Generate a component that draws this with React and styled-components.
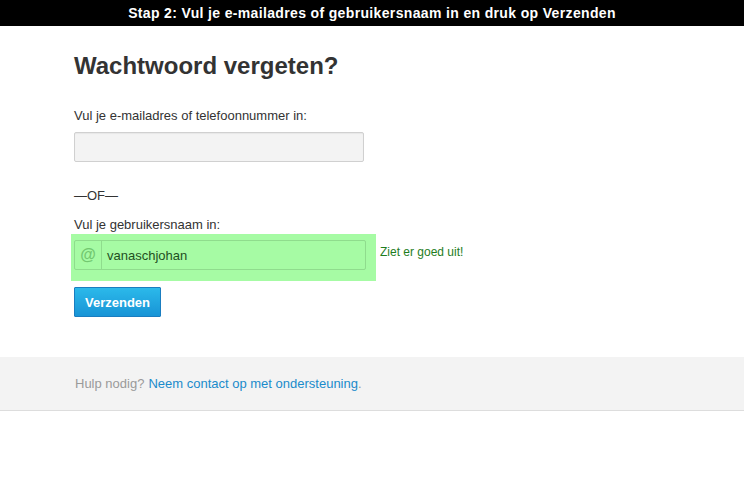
import React from 'react';
import styled, { createGlobalStyle } from 'styled-components';

const GlobalStyle = createGlobalStyle`
	body {
		margin: 0;
		background: #ffffff;
		font-family: "Liberation Sans", Arial, sans-serif;
		color: #333333;
	}
`;

const StepBar = styled.div`
	height: 26px;
	background: #000000;
	color: #ffffff;
	font-size: 14px;
	font-weight: bold;
	display: flex;
	align-items: center;
	justify-content: center;
	letter-spacing: 0.35px;
`;

const Main = styled.div`
	padding: 24px 74px 40px;
`;

const Title = styled.h1`
	margin: 0 0 26px;
	font-size: 24px;
	line-height: 32px;
	font-weight: bold;
	color: #333333;
`;

const Label = styled.div`
	font-size: 13px;
	line-height: 16px;
	color: #333333;
	margin-bottom: ${(props) => (props.tight ? '1px' : '8px')};
`;

const TextInput = styled.div`
	width: 288px;
	height: 28px;
	border: 1px solid #d0d0d0;
	border-radius: 2px;
	background: #f3f3f3;
	box-shadow: inset 0 1px 1px rgba(0, 0, 0, 0.05);
`;

const Divider = styled.div`
	font-size: 13px;
	line-height: 16px;
	color: #333333;
	margin: 26px 0 13px;
`;

const FieldRow = styled.div`
	display: flex;
	align-items: center;
	gap: 4px;
	margin: 0 0 6px -3px;
`;

const Highlight = styled.div`
	background: #a6fba4;
	padding: 6px 10px 11px 3px;
`;

const InputGroup = styled.div`
	display: flex;
	width: 290px;
	height: 28px;
	border: 1px solid #8fdc8d;
	border-radius: 2px;
`;

const Addon = styled.div`
	width: 26px;
	border-right: 1px solid #8fdc8d;
	display: flex;
	align-items: center;
	justify-content: center;
	color: #72c870;
	font-size: 16px;
	font-weight: bold;
`;

const Value = styled.div`
	flex: 1;
	display: flex;
	align-items: center;
	padding-left: 5px;
	font-size: 13px;
	color: #1f4f1f;
`;

const Valid = styled.span`
	font-size: 12px;
	color: #1e7d1e;
	margin-top: -12px;
`;

const Button = styled.button`
	height: 30px;
	padding: 0 10px;
	border: 1px solid #1a7dc0;
	border-radius: 1px;
	background: linear-gradient(#2bb9ea, #1894d6);
	color: #ffffff;
	font-family: "Liberation Sans", Arial, sans-serif;
	font-size: 13px;
	font-weight: bold;
`;

const Footer = styled.div`
	background: #f3f3f3;
	border-bottom: 1px solid #dddddd;
	height: 53px;
	padding-left: 75px;
	display: flex;
	align-items: center;
	font-size: 13px;
	color: #9a9a9a;
`;

const FooterLink = styled.a`
	color: #1a8bcb;
	text-decoration: none;
	margin-left: 4px;
`;

export default function App() {
	return (
		<>
			<GlobalStyle />
			<StepBar>Stap 2: Vul je e-mailadres of gebruikersnaam in en druk op Verzenden</StepBar>
			<Main>
				<Title>Wachtwoord vergeten?</Title>
				<Label>Vul je e-mailadres of telefoonnummer in:</Label>
				<TextInput />
				<Divider>—OF—</Divider>
				<Label tight>Vul je gebruikersnaam in:</Label>
				<FieldRow>
					<Highlight>
						<InputGroup>
							<Addon>@</Addon>
							<Value>vanaschjohan</Value>
						</InputGroup>
					</Highlight>
					<Valid>Ziet er goed uit!</Valid>
				</FieldRow>
				<Button>Verzenden</Button>
			</Main>
			<Footer>
				Hulp nodig?<FooterLink href="#">Neem contact op met ondersteuning</FooterLink>.
			</Footer>
		</>
	);
}
